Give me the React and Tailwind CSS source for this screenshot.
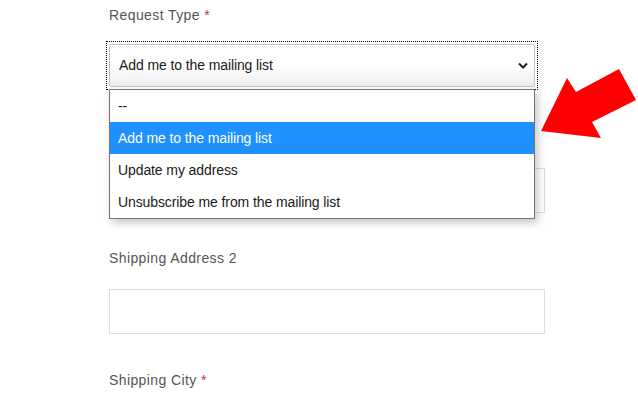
export default function App() {
  const options = [
    "--",
    "Add me to the mailing list",
    "Update my address",
    "Unsubscribe me from the mailing list",
  ];

  return (
    <div className="relative w-[638px] h-[401px] overflow-hidden bg-white font-['Liberation_Sans',Arial,sans-serif]">
      <div className="pl-[109px] w-[545px]">
        <label className="block pt-[5px] h-[24px] text-[14px] leading-[20px] tracking-[0.4px] text-[#555555]">
          Request Type <span className="text-[#d0253a]">*</span>
        </label>

        <div className="mt-[20px] w-[426px] outline outline-1 outline-dotted outline-black outline-offset-2">
          <div className="flex items-center justify-between h-[43px] px-[9px] rounded-[2px] border border-[#c3c3c3] bg-gradient-to-b from-white via-white to-[#ececec] text-[14px] tracking-[-0.1px] text-[#1a1a1a]">
            <span>Add me to the mailing list</span>
            <svg width="10" height="7" viewBox="0 0 10 7" className="mr-[-3px]">
              <polyline points="1,1.5 5,5.5 9,1.5" fill="none" stroke="#222" strokeWidth="2" />
            </svg>
          </div>
        </div>

        {/* label hidden under the open list */}
        <div className="mt-[40px] h-[20px]"></div>
        <div className="mt-[21px] h-[45px] border border-[#dddddd] bg-white"></div>

        <label className="block mt-[35px] h-[20px] text-[14px] leading-[20px] tracking-[0.4px] text-[#555555]">
          Shipping Address 2
        </label>
        <div className="mt-[21px] h-[45px] border border-[#dddddd] bg-white"></div>

        <label className="block mt-[36px] h-[20px] text-[14px] leading-[20px] tracking-[0.4px] text-[#555555]">
          Shipping City <span className="text-[#d0253a]">*</span>
        </label>
        <div className="mt-[21px] h-[45px] border border-[#dddddd] bg-white"></div>
      </div>

      {/* open dropdown list */}
      <div className="absolute left-[109px] top-[89px] w-[426px] border border-[#767676] bg-white shadow-[3px_4px_8px_rgba(0,0,0,0.22)]">
        {options.map((o, i) => (
          <div
            key={o}
            className={
              i === 1
                ? "h-[32px] flex items-center px-[8px] text-[14px] tracking-[-0.1px] bg-[#1e90ff] text-white"
                : "h-[32px] flex items-center px-[8px] text-[14px] tracking-[-0.1px] text-[#1a1a1a]"
            }
          >
            {o}
          </div>
        ))}
      </div>

      {/* red arrow */}
      <svg className="absolute left-0 top-0" width="638" height="401" viewBox="0 0 638 401">
        <polygon
          points="541,131 567,78 576,92 619,69 636,100 592,122 601,138"
          fill="#ff0000"
        />
      </svg>
    </div>
  );
}
